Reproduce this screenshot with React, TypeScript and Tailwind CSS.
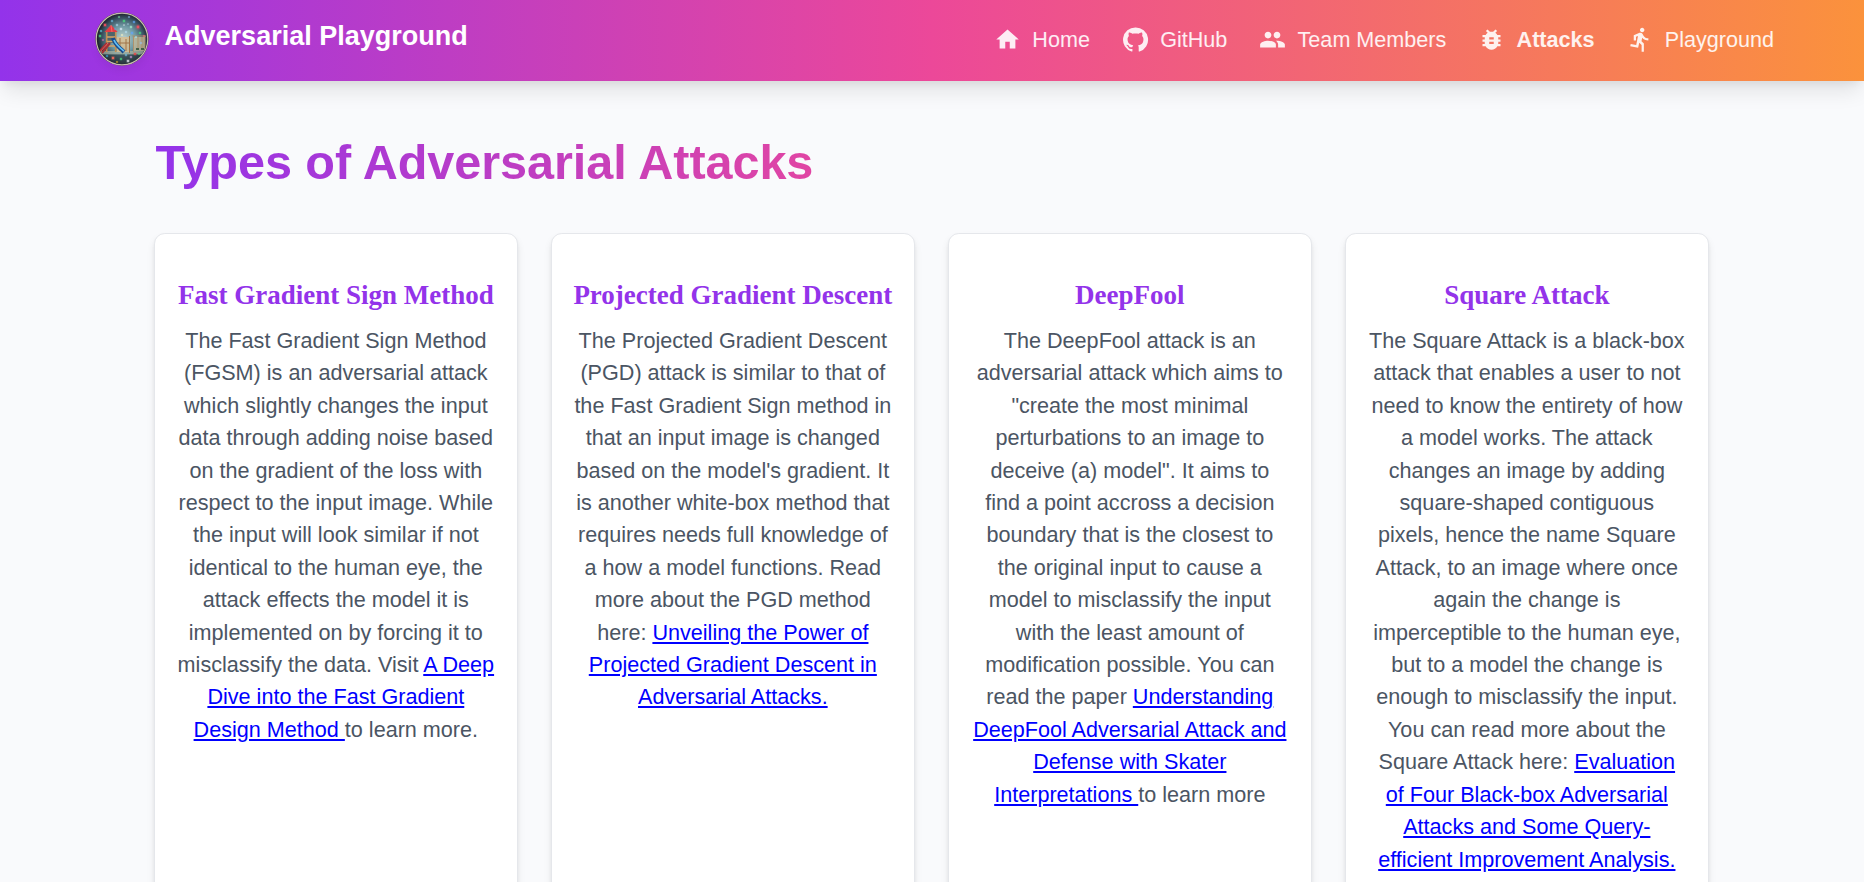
import React from "react";
import { MdHome, MdPeople, MdBugReport, MdDirectionsRun } from "react-icons/md";

const GitHubMark = ({ className }: { className?: string }) => (
  <svg viewBox="0 0 24 24" fill="currentColor" className={className}>
    <path d="M12 1.27a11 11 0 00-3.48 21.46c.55.09.73-.28.73-.55v-1.84c-3.03.64-3.67-1.46-3.67-1.46-.55-1.29-1.28-1.65-1.28-1.65-.92-.65.1-.65.1-.65 1.1 0 1.73 1.1 1.73 1.1.92 1.65 2.57 1.2 3.21.92a2 2 0 01.64-1.47c-2.47-.27-5.04-1.19-5.04-5.5 0-1.1.46-2.1 1.2-2.84a3.76 3.76 0 010-2.93s.91-.28 3.11 1.1c1.8-.49 3.7-.49 5.5 0 2.1-1.38 3.02-1.1 3.02-1.1a3.76 3.76 0 01.1 2.93c.83.74 1.2 1.74 1.2 2.94 0 4.21-2.57 5.13-5.04 5.4.45.37.82.92.82 2.02v3.03c0 .27.1.64.73.55A11 11 0 0012 1.27" />
  </svg>
);

const lights: [number, number, number, string][] = [
  [17, 9, 0.8, "#7dd3fc"], [24, 5, 0.7, "#86efac"], [29, 9, 1, "#4ade80"], [34, 5, 0.7, "#93c5fd"],
  [39, 10, 0.9, "#60a5fa"], [43, 15, 1.4, "#f4505f"], [36, 15, 0.9, "#a7f3d0"], [10, 13, 1.2, "#f4505f"],
  [22, 13, 0.8, "#bae6fd"], [26, 17, 0.9, "#e0f2fe"], [31, 20, 0.8, "#bae6fd"], [37, 21, 1, "#60a5fa"],
  [45, 21, 0.9, "#4ade80"], [49, 24, 0.8, "#fb7185"], [6, 19, 0.8, "#67e8f9"], [5, 24, 1, "#4ade80"],
  [8, 28, 0.7, "#f472b6"], [27, 23, 0.7, "#fef9c3"], [20, 17, 0.6, "#60a5fa"], [41, 25, 0.7, "#a5f3fc"],
  [18, 46, 1.2, "#fb6a5a"], [26, 47, 0.9, "#4ade80"], [33, 49, 1.1, "#e2e8f0"], [12, 44, 0.8, "#38bdf8"],
  [40, 42, 1.1, "#ef4444"], [36, 45, 0.8, "#f0abfc"], [31, 43, 0.8, "#7dd3fc"], [44, 42, 0.7, "#4ade80"],
  [22, 50, 0.7, "#fbbf24"], [46, 31, 0.8, "#93c5fd"], [29, 13, 0.5, "#ffffff"], [33, 12, 0.5, "#bae6fd"],
];

const Logo = () => (
  <svg viewBox="0 0 54 54" className="size-[54px] rounded-full shadow-[0_5.4px_8px_-1.35px_rgba(0,0,0,0.06)]">
    <defs>
      <radialGradient id="sky" cx="0.52" cy="0.5" r="0.5">
        <stop offset="0" stopColor="#c3d6d0" />
        <stop offset="0.5" stopColor="#7099a3" />
        <stop offset="0.82" stopColor="#385160" />
        <stop offset="1" stopColor="#1d212b" />
      </radialGradient>
      <clipPath id="disc"><circle cx="27" cy="27" r="25" /></clipPath>
    </defs>
    <circle cx="27" cy="27" r="26.8" fill="#453c40" />
    <circle cx="27" cy="27" r="25.8" fill="url(#sky)" stroke="#c5bcae" strokeWidth="1.2" />
    <g clipPath="url(#disc)">
      <rect x="0" y="39" width="54" height="3.5" fill="#b0bba8" opacity="0.65" />
      <rect x="0" y="42.5" width="54" height="12" fill="#2c3c40" opacity="0.6" />
      <rect x="22" y="25" width="12" height="15" fill="#d6bd92" opacity="0.85" />
      <path d="M22 31h12M34.5 24v17M31 27v12M25 26v13" stroke="#a17448" strokeWidth="1" />
      <rect x="38" y="25" width="12" height="14" fill="#cabd9b" opacity="0.75" />
      <path d="M37.5 24H51M38.5 24v16M50 24v16M43 25v12M47 25v12" stroke="#ae8f68" strokeWidth="0.9" />
      <path d="M41 37h3M46 37h3" stroke="#234b32" strokeWidth="1.4" />
      <rect x="12" y="20" width="9" height="11" fill="#4e646b" />
      <path d="M11.7 19v21M20.7 19v21" stroke="#c28e51" strokeWidth="1.6" />
      <path d="M12 25h8M12 29.5h9M12 34h8" stroke="#d7a365" strokeWidth="1.3" />
      <path d="M9.5 20L16 13l6.7 7z" fill="#e23c45" />
      <path d="M16 13l1 7" stroke="#fa8073" strokeWidth="0.7" />
      <path d="M12 31L4 40M15 31L7 41" stroke="#a52f36" strokeWidth="2.1" />
      <path d="M13 31l-8 9" stroke="#ef645e" strokeWidth="0.8" />
      <path d="M18 26c2 7 5 8 11 14" fill="none" stroke="#174b8d" strokeWidth="4" />
      <path d="M19 28c2 5 5 7 10 11" fill="none" stroke="#62bdf1" strokeWidth="1.8" />
      {lights.map(([x, y, r, color], i) => (
        <g key={i}>
          <circle cx={x} cy={y} r={r * 1.9} fill={color} opacity="0.25" />
          <circle cx={x} cy={y} r={r} fill={color} opacity="0.9" />
        </g>
      ))}
    </g>
  </svg>
);

const navItems = [
  { label: "Home", Icon: MdHome },
  { label: "GitHub", Icon: GitHubMark },
  { label: "Team Members", Icon: MdPeople },
  { label: "Attacks", Icon: MdBugReport, active: true },
  { label: "Playground", Icon: MdDirectionsRun },
];

const attacks = [
  {
    title: "Fast Gradient Sign Method",
    body: "The Fast Gradient Sign Method (FGSM) is an adversarial attack which slightly changes the input data through adding noise based on the gradient of the loss with respect to the input image. While the input will look similar if not identical to the human eye, the attack effects the model it is implemented on by forcing it to misclassify the data. Visit ",
    link: "A Deep Dive into the Fast Gradient Design Method ",
    tail: "to learn more.",
  },
  {
    title: "Projected Gradient Descent",
    body: "The Projected Gradient Descent (PGD) attack is similar to that of the Fast Gradient Sign method in that an input image is changed based on the model's gradient. It is another white-box method that requires needs full knowledge of a how a model functions. Read more about the PGD method here: ",
    link: "Unveiling the Power of Projected Gradient Descent in Adversarial Attacks.",
    tail: "",
  },
  {
    title: "DeepFool",
    body: "The DeepFool attack is an adversarial attack which aims to \"create the most minimal perturbations to an image to deceive (a) model\". It aims to find a point accross a decision boundary that is the closest to the original input to cause a model to misclassify the input with the least amount of modification possible. You can read the paper ",
    link: "Understanding DeepFool Adversarial Attack and Defense with Skater Interpretations ",
    tail: "to learn more",
  },
  {
    title: "Square Attack",
    body: "The Square Attack is a black-box attack that enables a user to not need to know the entirety of how a model works. The attack changes an image by adding square-shaped contiguous pixels, hence the name Square Attack, to an image where once again the change is imperceptible to the human eye, but to a model the change is enough to misclassify the input. You can read more about the Square Attack here: ",
    link: "Evaluation of Four Black-box Adversarial Attacks and Some Query-efficient Improvement Analysis.",
    tail: "",
  },
];

export default function App() {
  return (
    <div className="flex h-[882px] flex-col overflow-hidden bg-[#f9fafc] font-['Liberation_Sans',Arial,sans-serif] text-[21.6px] leading-[32.4px]">
      <header className="relative z-10 h-[81px] shrink-0 bg-[linear-gradient(90deg,#9333ea,#ec4899,#fb923c)] shadow-[0_13.5px_20.25px_-4px_rgba(0,0,0,0.1),0_5.4px_8.1px_-2.7px_rgba(0,0,0,0.05)]">
        <div className="flex h-[78px] items-center justify-between pl-[95px] pr-[90px]">
          <div className="flex items-center gap-[15.6px]">
            <Logo />
            <span className="pb-[5px] text-[27px] font-bold text-white">Adversarial Playground</span>
          </div>
          <nav className="flex items-center gap-[32px]">
            {navItems.map(({ label, Icon, active }) => (
              <a key={label} className={`flex items-center gap-[11.2px] text-white/90 ${active ? "font-bold" : ""}`}>
                <Icon className="size-[27px]" />
                <span className="pt-[2px]">{label}</span>
              </a>
            ))}
          </nav>
        </div>
      </header>
      <main className="ml-[154.4px] w-[1554.7px] pt-[52px]">
        <h1 className="ml-[1px] w-fit bg-[linear-gradient(90deg,#9333ea,#ec4899_115%)] bg-clip-text text-[48.6px] font-bold leading-[58px] tracking-[-0.07px] text-transparent">
          Types of Adversarial Attacks
        </h1>
        <div className="mt-[42px] grid grid-cols-4 gap-[33.3px]">
          {attacks.map((a) => (
            <article key={a.title} className="h-[720px] rounded-[10.8px] border border-[#e5e7eb] bg-white pl-[21px] pr-[21.8px] pt-[43px] text-center shadow-[0_5.4px_8.1px_-1.35px_rgba(0,0,0,0.1),0_2.7px_5.4px_-2.7px_rgba(0,0,0,0.1)]">
              <h2 className="whitespace-nowrap font-['Liberation_Serif',serif] text-[27px] font-bold leading-[36px] text-[#9333ea]">{a.title}</h2>
              <p className="mt-[12px] text-[#4b5563]">
                {a.body}
                <a className="text-[#0000ff] underline">{a.link}</a>
                {a.tail}
              </p>
            </article>
          ))}
        </div>
      </main>
    </div>
  );
}
